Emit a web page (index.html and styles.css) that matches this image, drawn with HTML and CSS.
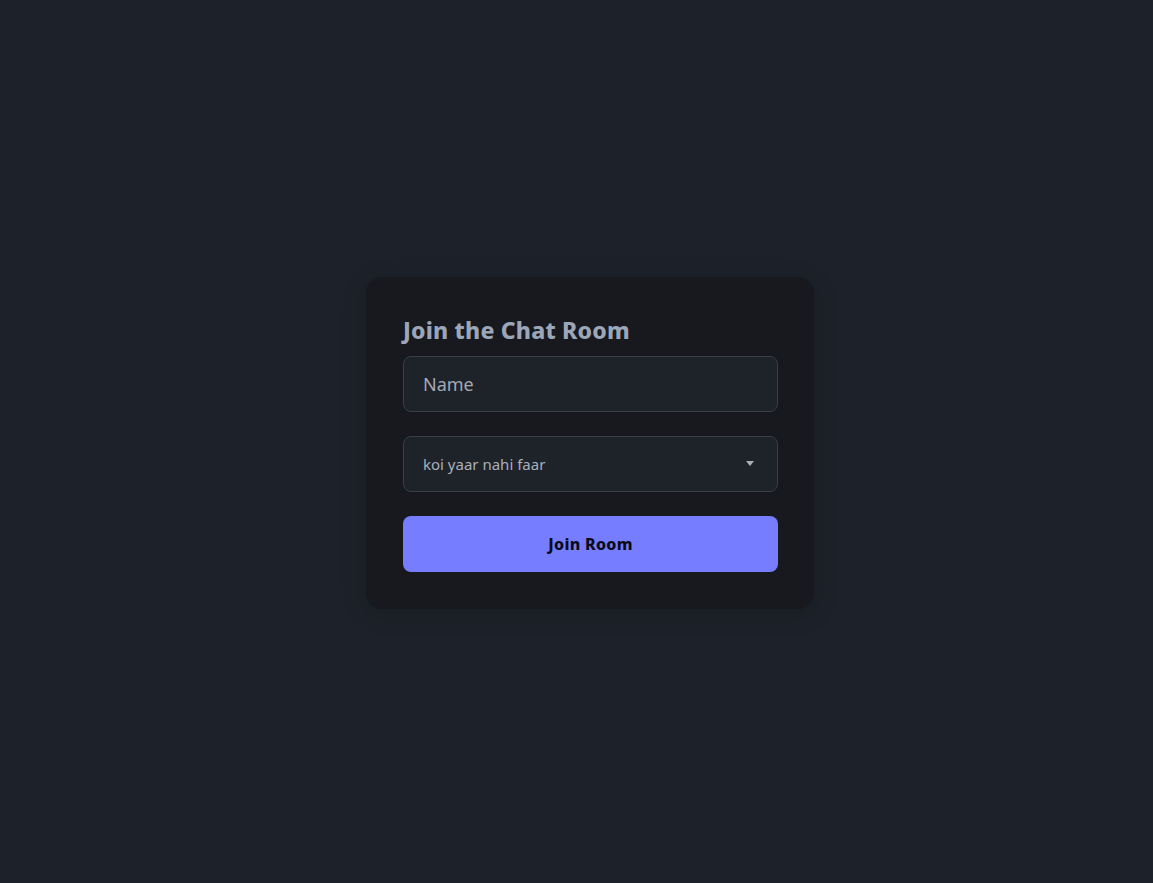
FILE: index.html
```html
<!DOCTYPE html>
<html>
<head>
<meta charset="utf-8">
<link rel="stylesheet" href="styles.css">
</head>
<body>
<div class="page">
  <form class="card">
    <h1 class="title">Join the Chat Room</h1>
    <input class="field" type="text" placeholder="Name">
    <div class="select">
      <span class="select-text">koi yaar nahi faar</span>
      <svg class="caret" width="8" height="5" viewBox="0 0 8 5"><path d="M0 0h8L4 5z" fill="#a8b0bd"/></svg>
    </div>
    <button class="btn" type="button">Join Room</button>
  </form>
</div>
</body>
</html>
```
FILE: styles.css
```css
* { box-sizing: border-box; }
html, body { margin: 0; height: 100%; }
body {
  background: #1d222a;
  font-family: "Noto Sans", "Open Sans", sans-serif;
}
.page {
  height: 100%;
  display: flex;
  align-items: center;
  justify-content: center;
  padding-left: 27px;
  padding-top: 2px;
}
.card {
  width: 448px;
  background: #17191e;
  border-radius: 16px;
  padding: 36px 36px 37px 37px;
  display: flex;
  flex-direction: column;
  box-shadow: 0 4px 24px rgba(0,0,0,0.18);
}
.title {
  margin: 0 0 9px;
  font-size: 23px;
  font-weight: 800;
  line-height: 34px;
  color: #9ba6b8;
  letter-spacing: 0.2px;
}
.field {
  height: 56px;
  width: 375px;
  background: #1e2229;
  border: 1px solid #393e47;
  border-radius: 8px;
  padding: 0 19px;
  font-family: inherit;
  font-size: 18px;
  color: #a9b0bc;
  outline: none;
}
.field::placeholder { color: #a3aab6; }
.select {
  margin-top: 24px;
  height: 56px;
  width: 375px;
  background: #1e2229;
  border: 1px solid #393e47;
  border-radius: 8px;
  padding: 0 23px 0 19px;
  display: flex;
  align-items: center;
  justify-content: space-between;
}
.select-text {
  font-size: 15px;
  color: #a9b0bc;
}
.btn {
  margin-top: 24px;
  height: 56px;
  width: 375px;
  background: #777dff;
  border: none;
  border-radius: 8px;
  font-family: inherit;
  font-size: 16px;
  font-weight: 800;
  color: #0b0b18;
  letter-spacing: 0.3px;
}
```
